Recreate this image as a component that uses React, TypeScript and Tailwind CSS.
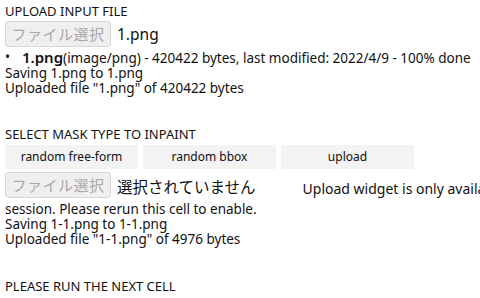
import React from "react";

const font = { fontFamily: '"Noto Sans", "Noto Sans CJK JP", sans-serif' };

function FileButton() {
	return (
		<span className="shrink-0 inline-flex items-center justify-center h-[26px] w-[106px] border border-[#d6d6d6] bg-[#efefef] rounded-[3px] text-[15px] leading-[20px] text-[#a8a8a8] tracking-[0.5px]">
			ファイル選択
		</span>
	);
}

export default function App() {
	return (
		<div className="w-[480px] h-[298px] overflow-hidden bg-white text-[#111] pl-[5px]" style={font}>
			<div className="pt-[2px] text-[13px] leading-[18px]">UPLOAD INPUT FILE</div>
			<div className="flex items-center gap-[6px] mt-[1px] whitespace-nowrap">
				<FileButton />
				<span className="text-[15.5px] leading-[20px]">1.png</span>
			</div>
			<div className="text-[13.5px] leading-[15px] whitespace-nowrap mt-[3px]">
				<div className="flex">
					<span className="w-[17px]">•</span>
					<span>
						<b className="font-semibold text-[15px] leading-[15px]">1.png</b>(image/png) - 420422 bytes, last modified: 2022/4/9 - 100% done
					</span>
				</div>
				<div>Saving 1.png to 1.png</div>
				<div>Uploaded file "1.png" of 420422 bytes</div>
			</div>

			<div className="mt-[29px] text-[13px] leading-[18px]">SELECT MASK TYPE TO INPAINT</div>
			<div className="flex gap-[5px] mt-[2px]">
				<button className="w-[133px] h-[24px] bg-[#f3f3f3] text-[12px] leading-[16px]">random free-form</button>
				<button className="w-[133px] h-[24px] bg-[#f3f3f3] text-[12px] leading-[16px]">random bbox</button>
				<button className="w-[133px] h-[24px] bg-[#f3f3f3] text-[12px] leading-[16px]">upload</button>
			</div>
			<div className="flex items-end mt-[3px] whitespace-nowrap">
				<FileButton />
				<span className="text-[15.5px] leading-[22px] ml-[6px]">選択されていません</span>
				<span className="text-[14px] ml-[47px] leading-[18px]">Upload widget is only availab</span>
			</div>
			<div className="text-[13.5px] leading-[15px] whitespace-nowrap mt-[4px]">
				<div>session. Please rerun this cell to enable.</div>
				<div>Saving 1-1.png to 1-1.png</div>
				<div>Uploaded file "1-1.png" of 4976 bytes</div>
			</div>

			<div className="mt-[30px] text-[13px] leading-[18px]">PLEASE RUN THE NEXT CELL</div>
		</div>
	);
}
